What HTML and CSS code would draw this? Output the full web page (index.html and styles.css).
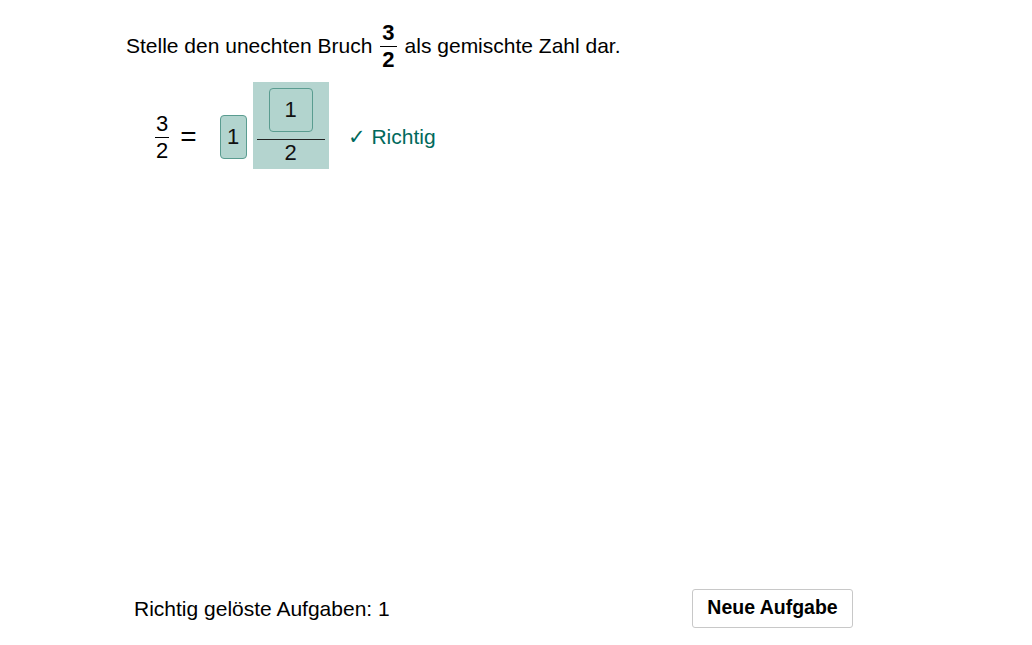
FILE: index.html
```html
<!DOCTYPE html>
<html lang="de">
<head>
<meta charset="utf-8">
<title>Gemischte Zahl</title>
<link rel="stylesheet" href="styles.css">
</head>
<body>
<div class="page">
  <div class="task">
    <span>Stelle den unechten Bruch</span>
    <span class="frac frac-bold"><span class="num">3</span><span class="den">2</span></span>
    <span>als gemischte Zahl dar.</span>
  </div>
  <div class="math">
    <span class="frac frac-small"><span class="num">3</span><span class="den">2</span></span>
    <span class="eq">=</span>
    <span class="whole box">1</span>
    <span class="hl">
      <span class="numbox box">1</span>
      <span class="bar"></span>
      <span class="den2">2</span>
    </span>
    <span class="ok">✓ Richtig</span>
  </div>
  <div class="footer">
    <span class="score">Richtig gelöste Aufgaben: 1</span>
    <button class="btn">Neue Aufgabe</button>
  </div>
</div>
</body>
</html>
```

FILE: styles.css
```css
html, body {
  margin: 0;
  padding: 0;
  background: #fff;
}
body {
  font-family: "Liberation Sans", Arial, sans-serif;
  color: #000;
  font-size: 21px;
}
.page {
  height: 645px;
  display: flex;
  flex-direction: column;
  box-sizing: border-box;
  padding: 20px 0 17px 126px;
}
.task {
  display: flex;
  align-items: center;
  gap: 6px;
  height: 52px;
}
.frac {
  display: inline-flex;
  flex-direction: column;
  align-items: center;
}
.frac-bold {
  font-weight: bold;
  font-size: 22px;
  margin: 0 2px;
}
.frac-bold .num {
  border-bottom: 1.5px solid #000;
  padding: 0 2px;
  line-height: 26px;
}
.frac-bold .den {
  line-height: 26px;
}
.math {
  display: flex;
  align-items: center;
  height: 110px;
  margin-top: 10px;
  padding-left: 29px;
}
.frac-small {
  font-size: 22px;
}
.frac-small .num, .frac-small .den {
  line-height: 26px;
}
.frac-small .num {
  border-bottom: 1px solid #000;
  padding: 0 1px;
}
.eq {
  margin-left: 11px;
  font-size: 28px;
  line-height: 30px;
}
.box {
  display: inline-flex;
  align-items: center;
  justify-content: center;
  box-sizing: border-box;
  height: 44px;
  background: #b2d4ce;
  border: 1px solid #5a9c90;
  border-radius: 4px;
  color: #111;
  font-size: 22px;
}
.whole {
  width: 27px;
  margin-left: 23px;
}
.hl {
  align-self: flex-start;
  display: inline-flex;
  flex-direction: column;
  align-items: center;
  background: #b4d4cf;
  margin-left: 6px;
  padding: 6px 4px 4px;
  width: 68px;
}
.numbox {
  width: 44px;
}
.bar {
  align-self: stretch;
  height: 0;
  border-top: 1px solid #222;
  margin-top: 7px;
}
.den2 {
  line-height: 24px;
  margin-top: 1px;
  color: #111;
  font-size: 22px;
}
.ok {
  margin-left: 19px;
  color: #00695c;
}
.footer {
  margin-top: auto;
  display: flex;
  align-items: center;
  justify-content: space-between;
  width: 719px;
  margin-left: 8px;
}
.btn {
  font-family: "Liberation Sans", Arial, sans-serif;
  font-weight: bold;
  font-size: 19.5px;
  width: 161px;
  height: 39px;
  background: #fff;
  border: 1px solid #c8c8c8;
  border-radius: 3px;
  color: #000;
  padding: 0 0 2px;
}
```
